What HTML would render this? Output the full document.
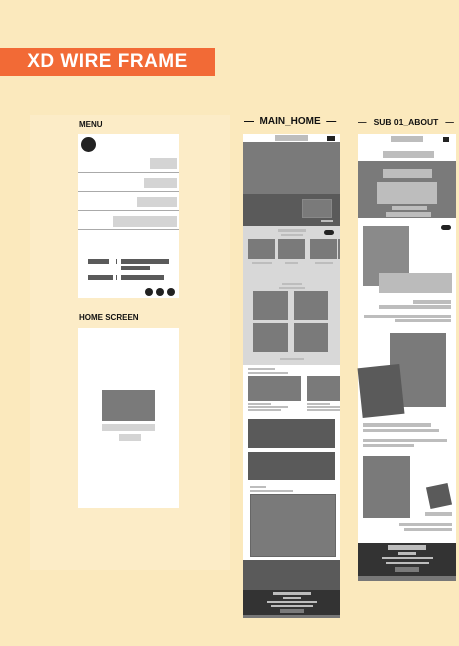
<!DOCTYPE html>
<html><head><style>
*{margin:0;padding:0;box-sizing:border-box}
body{width:459px;height:646px;background:#fbe9bd;position:relative;overflow:hidden;font-family:"Liberation Sans",sans-serif}
div{position:absolute}
.w{background:#fff}
.l{background:#d4d4d4}
.lb{background:#bdbdbd}
.m{background:#7a7a7a}
.d{background:#5a5a5a}
.k{background:#222}
.t{font-weight:bold;color:#111;font-size:8px;white-space:nowrap}
</style></head><body>
<div style="left:30px;top:115px;width:200px;height:455px;background:#fcecc7"></div>
<div style="left:0;top:48px;width:215px;height:28px;background:#f26a36;color:#fff;font-weight:bold;font-size:19px;line-height:28px;text-align:center;letter-spacing:0.5px">XD WIRE FRAME</div>

<div class="t" style="left:79px;top:120px">MENU</div>
<div class="w" style="left:78px;top:134px;width:101px;height:164px"></div>
<div class="k" style="left:81px;top:137px;width:15px;height:15px;border-radius:50%"></div>
<div class="l" style="left:150px;top:158px;width:27px;height:11px"></div>
<div style="left:78px;top:172px;width:101px;height:1px;background:#aaa"></div>
<div class="l" style="left:144px;top:178px;width:33px;height:10px"></div>
<div style="left:78px;top:191px;width:101px;height:1px;background:#aaa"></div>
<div class="l" style="left:137px;top:197px;width:40px;height:10px"></div>
<div style="left:78px;top:210px;width:101px;height:1px;background:#aaa"></div>
<div class="l" style="left:113px;top:216px;width:64px;height:11px"></div>
<div style="left:78px;top:229px;width:101px;height:1px;background:#aaa"></div>
<div class="d" style="left:88px;top:259px;width:21px;height:5px"></div>
<div class="d" style="left:116px;top:259px;width:1px;height:5px"></div>
<div class="d" style="left:121px;top:259px;width:48px;height:5px"></div>
<div class="d" style="left:121px;top:266px;width:29px;height:4px"></div>
<div class="d" style="left:88px;top:275px;width:25px;height:5px"></div>
<div class="d" style="left:116px;top:275px;width:1px;height:5px"></div>
<div class="d" style="left:121px;top:275px;width:43px;height:5px"></div>
<div class="k" style="left:145px;top:288px;width:8px;height:8px;border-radius:50%"></div>
<div class="k" style="left:156px;top:288px;width:8px;height:8px;border-radius:50%"></div>
<div class="k" style="left:167px;top:288px;width:8px;height:8px;border-radius:50%"></div>

<div class="t" style="left:79px;top:313px">HOME SCREEN</div>
<div class="w" style="left:78px;top:328px;width:101px;height:180px"></div>
<div class="m" style="left:102px;top:390px;width:53px;height:31px"></div>
<div class="l" style="left:102px;top:424px;width:53px;height:7px"></div>
<div class="l" style="left:119px;top:434px;width:22px;height:7px"></div>

<div class="t" style="left:244px;top:116px;font-size:10px">—&nbsp; MAIN_HOME &nbsp;—</div>
<div class="w" style="left:243px;top:134px;width:97px;height:483px"></div>
<div class="lb" style="left:275px;top:135px;width:33px;height:6px"></div>
<div class="k" style="left:327px;top:136px;width:8px;height:5px"></div>
<div class="m" style="left:243px;top:142px;width:97px;height:52px"></div>
<div class="d" style="left:243px;top:194px;width:97px;height:32px"></div>
<div class="m" style="left:302px;top:199px;width:30px;height:19px;border:1px solid #888"></div>
<div class="lb" style="left:321px;top:220px;width:12px;height:2px"></div>
<div style="left:243px;top:226px;width:97px;height:139px;background:#d8d8d8"></div>
<div class="lb" style="left:278px;top:229px;width:28px;height:3px"></div>
<div class="lb" style="left:281px;top:234px;width:22px;height:2px"></div>
<div class="k" style="left:324px;top:230px;width:10px;height:5px;border-radius:3px"></div>
<div class="m" style="left:248px;top:239px;width:27px;height:20px"></div>
<div class="m" style="left:278px;top:239px;width:27px;height:20px"></div>
<div class="m" style="left:310px;top:239px;width:27px;height:20px"></div>
<div class="m" style="left:338px;top:239px;width:2px;height:20px"></div>
<div class="lb" style="left:252px;top:262px;width:20px;height:2px"></div>
<div class="lb" style="left:285px;top:262px;width:13px;height:2px"></div>
<div class="lb" style="left:315px;top:262px;width:18px;height:2px"></div>
<div class="lb" style="left:282px;top:283px;width:20px;height:2px"></div>
<div class="lb" style="left:279px;top:287px;width:26px;height:2px"></div>
<div class="m" style="left:253px;top:291px;width:35px;height:29px"></div>
<div class="m" style="left:294px;top:291px;width:34px;height:29px"></div>
<div class="m" style="left:253px;top:323px;width:35px;height:29px"></div>
<div class="m" style="left:294px;top:323px;width:34px;height:29px"></div>
<div class="lb" style="left:280px;top:358px;width:24px;height:2px"></div>
<div class="lb" style="left:248px;top:368px;width:27px;height:2px"></div>
<div class="lb" style="left:248px;top:372px;width:40px;height:2px"></div>
<div class="m" style="left:248px;top:376px;width:53px;height:25px"></div>
<div class="m" style="left:307px;top:376px;width:33px;height:25px"></div>
<div class="lb" style="left:248px;top:403px;width:23px;height:2px"></div>
<div class="lb" style="left:248px;top:406px;width:40px;height:2px"></div>
<div class="lb" style="left:248px;top:409px;width:33px;height:2px"></div>
<div class="lb" style="left:307px;top:403px;width:23px;height:2px"></div>
<div class="lb" style="left:307px;top:406px;width:33px;height:2px"></div>
<div class="lb" style="left:307px;top:409px;width:33px;height:2px"></div>
<div class="d" style="left:248px;top:419px;width:87px;height:29px"></div>
<div class="d" style="left:248px;top:452px;width:87px;height:28px"></div>
<div class="lb" style="left:250px;top:486px;width:16px;height:2px"></div>
<div class="lb" style="left:250px;top:490px;width:43px;height:2px"></div>
<div class="m" style="left:250px;top:494px;width:86px;height:63px;border:1px solid #666"></div>
<div class="d" style="left:243px;top:560px;width:97px;height:30px"></div>
<div style="left:243px;top:590px;width:97px;height:25px;background:#333"></div>
<div style="left:243px;top:615px;width:97px;height:3px;background:#777"></div>
<div class="lb" style="left:273px;top:592px;width:38px;height:3px"></div>
<div class="lb" style="left:283px;top:597px;width:18px;height:2px"></div>
<div class="lb" style="left:267px;top:601px;width:50px;height:2px"></div>
<div class="lb" style="left:271px;top:605px;width:42px;height:2px"></div>
<div class="m" style="left:280px;top:609px;width:24px;height:4px"></div>

<div class="t" style="left:358px;top:117px;font-size:8.5px">—&nbsp;&nbsp; SUB 01_ABOUT &nbsp;&nbsp;—</div>
<div class="w" style="left:358px;top:134px;width:98px;height:447px"></div>
<div class="lb" style="left:391px;top:136px;width:32px;height:6px"></div>
<div class="k" style="left:443px;top:137px;width:6px;height:5px"></div>
<div class="lb" style="left:383px;top:151px;width:51px;height:7px"></div>
<div class="m" style="left:358px;top:161px;width:98px;height:57px"></div>
<div class="lb" style="left:383px;top:169px;width:49px;height:9px"></div>
<div class="lb" style="left:377px;top:182px;width:60px;height:22px"></div>
<div class="lb" style="left:392px;top:206px;width:35px;height:4px"></div>
<div class="lb" style="left:386px;top:212px;width:45px;height:5px"></div>
<div class="k" style="left:441px;top:225px;width:10px;height:5px;border-radius:3px"></div>
<div style="left:363px;top:226px;width:46px;height:60px;background:#8a8a8a"></div>
<div style="left:379px;top:273px;width:73px;height:20px;background:#bbb"></div>
<div class="lb" style="left:413px;top:300px;width:38px;height:4px"></div>
<div class="lb" style="left:379px;top:305px;width:72px;height:4px"></div>
<div class="lb" style="left:364px;top:315px;width:87px;height:3px"></div>
<div class="lb" style="left:395px;top:319px;width:56px;height:3px"></div>
<div class="m" style="left:390px;top:333px;width:56px;height:74px"></div>
<div class="d" style="left:360px;top:366px;width:42px;height:50px;transform:rotate(-6deg)"></div>
<div class="lb" style="left:363px;top:423px;width:68px;height:4px"></div>
<div class="lb" style="left:363px;top:429px;width:76px;height:3px"></div>
<div class="lb" style="left:363px;top:439px;width:84px;height:3px"></div>
<div class="lb" style="left:363px;top:444px;width:51px;height:3px"></div>
<div class="m" style="left:363px;top:456px;width:47px;height:62px"></div>
<div class="d" style="left:428px;top:485px;width:22px;height:22px;transform:rotate(-12deg)"></div>
<div class="lb" style="left:425px;top:512px;width:27px;height:4px"></div>
<div class="lb" style="left:399px;top:523px;width:53px;height:3px"></div>
<div class="lb" style="left:404px;top:528px;width:48px;height:3px"></div>
<div style="left:358px;top:543px;width:98px;height:33px;background:#333"></div>
<div style="left:358px;top:576px;width:98px;height:5px;background:#777"></div>
<div class="lb" style="left:388px;top:545px;width:38px;height:5px"></div>
<div class="lb" style="left:398px;top:552px;width:18px;height:3px"></div>
<div class="lb" style="left:382px;top:557px;width:51px;height:2px"></div>
<div class="lb" style="left:386px;top:562px;width:43px;height:2px"></div>
<div class="m" style="left:395px;top:567px;width:24px;height:5px"></div>
</body></html>
